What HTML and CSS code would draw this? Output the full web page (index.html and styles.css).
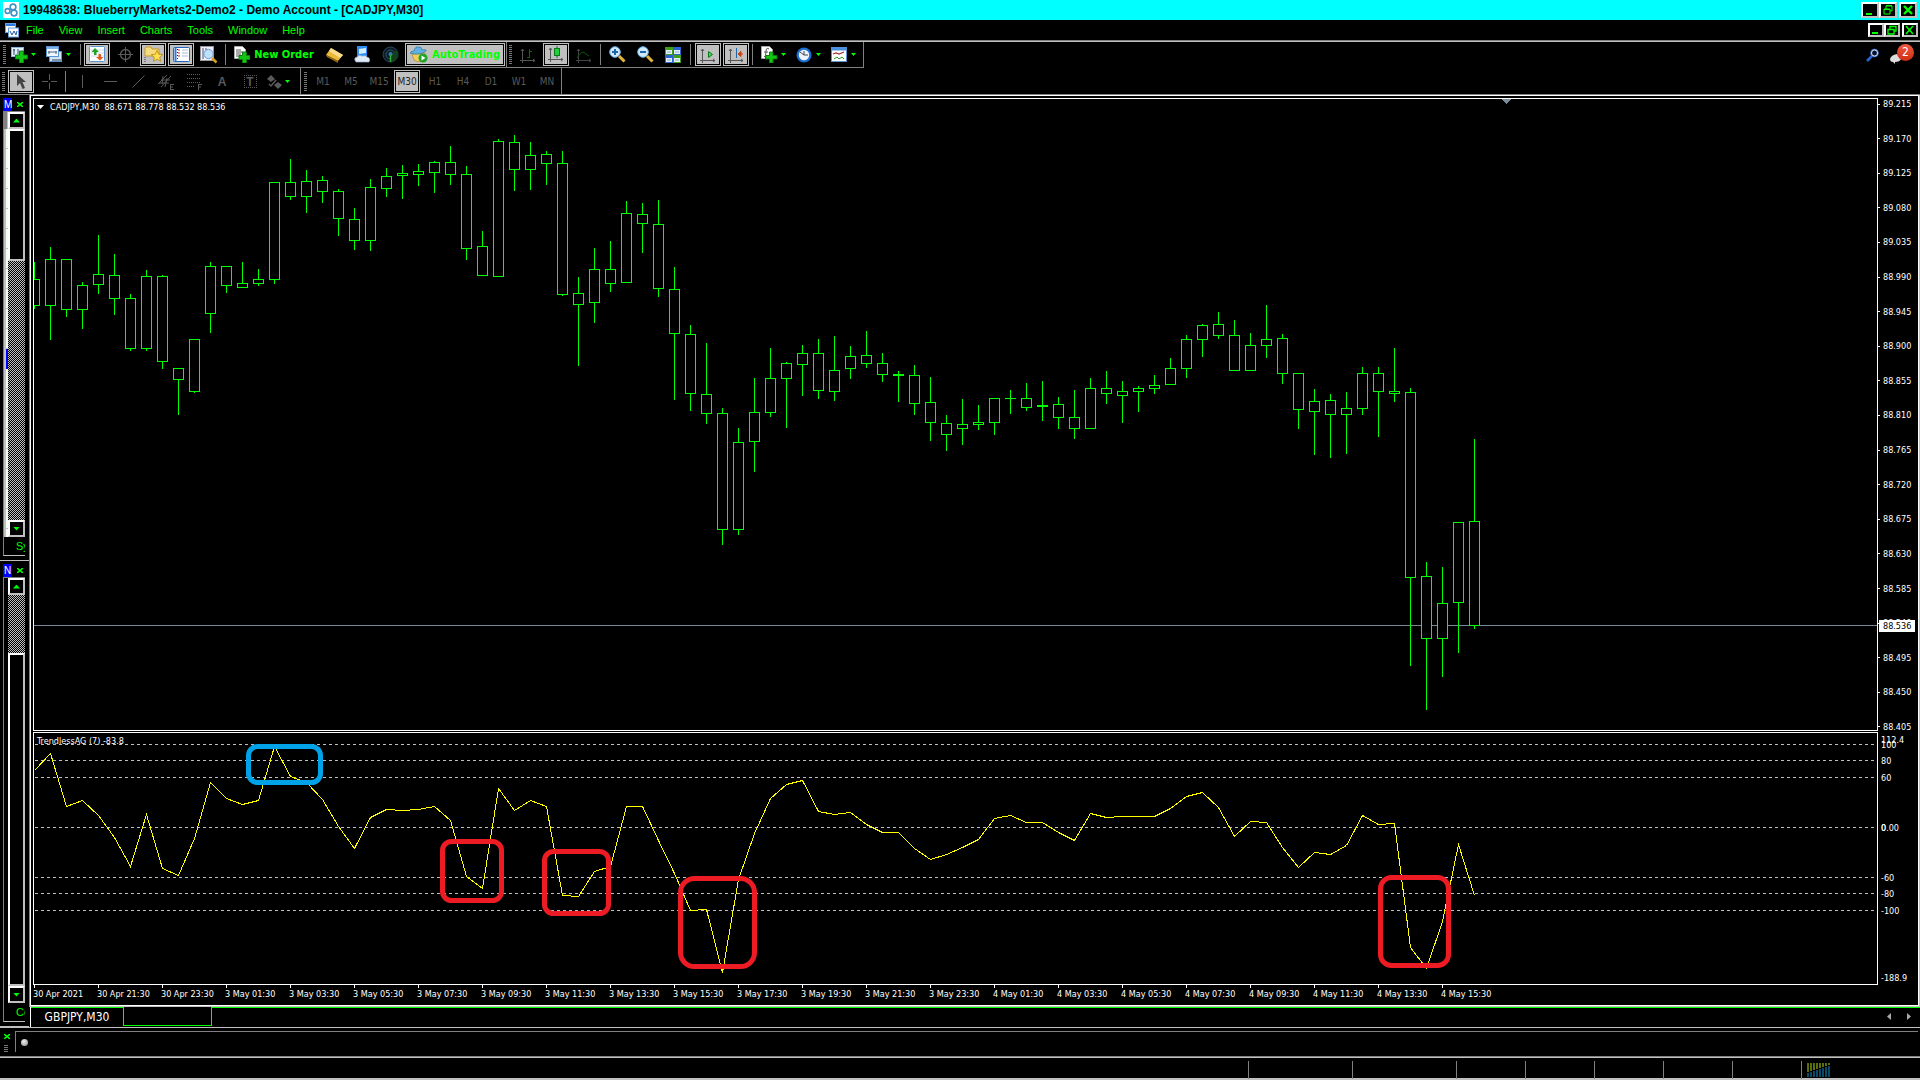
FILE: index.html
```html
<!DOCTYPE html>
<html lang="en">
<head>
<meta charset="utf-8">
<title>19948638: BlueberryMarkets2-Demo2 - Demo Account - [CADJPY,M30]</title>
<link rel="stylesheet" href="styles.css">
</head>
<body>
<header class="titlebar">
  <svg class="app-logo" width="16" height="16" viewBox="0 0 16 16"><rect width="16" height="16" fill="#fff"/><g fill="none" stroke="#3f93c6" stroke-width="1.6"><circle cx="10" cy="5" r="2.9"/><circle cx="4.6" cy="9" r="2.4"/><circle cx="11" cy="11" r="2.9"/></g></svg>
  <h1 class="titlebar__text">19948638: BlueberryMarkets2-Demo2 - Demo Account - [CADJPY,M30]</h1>
  <div class="winbtns">
    <button class="winbtn" aria-label="Minimize"><svg width="12" height="12"><path d="M2 9h6v2H2z" fill="#0f0"/></svg></button>
    <button class="winbtn" aria-label="Restore"><svg width="12" height="12"><path d="M4 5V2h6v5H8M2 5h6v5H2z" fill="none" stroke="#0f0" stroke-width="1"/><path d="M4 1h6v1H4zM2 5h6v1H2z" fill="#0f0"/></svg></button>
    <button class="winbtn winbtn--close" aria-label="Close"><svg width="12" height="12"><path d="M2 2l8 8M10 2l-8 8" stroke="#0f0" stroke-width="2.4"/></svg></button>
  </div>
</header>
<nav class="menubar">
  <svg class="menubar__icon" width="14" height="15" viewBox="0 0 14 15"><rect x=".5" y=".5" width="10" height="9" fill="#fff" stroke="#6aa0e0"/><path d="M1 2h9" stroke="#2e7be0" stroke-width="2"/><rect x="3.500" y="5" width="10" height="9" fill="#fff" stroke="#6aa0e0"/><path d="M5 8l2 4 2-4 2 4 1-4" fill="none" stroke="#25539c"/></svg>
  <button>File</button><button>View</button><button>Insert</button><button>Charts</button><button>Tools</button><button>Window</button><button>Help</button>
  <div class="winbtns winbtns--small">
    <button class="winbtn" aria-label="Minimize chart"><svg width="12" height="10"><path d="M2 7h6v2H2z" fill="#0f0"/></svg></button>
    <button class="winbtn" aria-label="Restore chart"><svg width="12" height="10"><path d="M4 4V1.500h6V6H8M2 4.500h6V9H2z" fill="none" stroke="#0f0" stroke-width="1.3"/></svg></button>
    <button class="winbtn winbtn--close" aria-label="Close chart"><svg width="12" height="10"><path d="M2 1l7 8M9 1L2 9" stroke="#0f0" stroke-width="1.500"/></svg></button>
  </div>
</nav>

<div class="toolbars">
  <div class="toolrow toolrow--top">
    <div class="group group--standard">
      <span class="grip"></span>
      <button class="tool tool--drop" aria-label="New chart"><svg width="17" height="17"><rect x="0.500" y="1.500" width="12" height="9" fill="#dff0ff" stroke="#8bb4dc"/><path d="M3 3v6M2 4h2M7 3v5" stroke="#345"/><path d="M8.500 5h4v4h4v4h-4v4h-4v-4h-4V9h4z" fill="#12c512" stroke="#0a7d0a"/></svg><i class="caret"></i></button>
      <button class="tool tool--drop" aria-label="Profiles"><svg width="17" height="17"><rect x="3.500" y="5.500" width="12" height="10" fill="#cfe2f7" stroke="#5b93d1"/><path d="M6 14h9" stroke="#345"/><rect x=".5" y=".5" width="12" height="10" fill="#eef6ff" stroke="#5b93d1"/><path d="M1 2h11" stroke="#7fb2ea" stroke-width="2"/><path d="M2 6h9M3 5v3M10 5v3" stroke="#567"/></svg><i class="caret"></i></button>
      <span class="sep"></span>
      <button class="tool is-on" aria-label="Market Watch"><svg width="17" height="17"><rect x=".5" y=".5" width="15" height="15" rx="1" fill="#fff" stroke="#5b93d1"/><path d="M2 4h13M2 7h13M2 10h13" stroke="#ccd8e8"/><path d="M6 2L2.500 6H5v3h2.500V6H10z" fill="#22a322"/><path d="M11 14.500L14.500 11H12V8H9.500v3H7z" fill="#e05a1c"/></svg></button>
      <button class="tool" aria-label="Data Window"><svg width="17" height="17"><g fill="none" stroke="#5a5a5a"><circle cx="8.500" cy="8.500" r="5" stroke-width="1.300"/><path d="M8.500 1v15M1 8.500h15"/></g></svg></button>
      <button class="tool is-on" aria-label="Navigator"><svg width="19" height="17"><path d="M1 2l1-1h5l1 2h7v7H1z" fill="#f7dc7d" stroke="#c59b27"/><path d="M13 4.500l1.700 3.700 4 .4-3 2.700.9 4-3.600-2-3.600 2 .9-4-3-2.700 4-.4z" fill="#ffdf4d" stroke="#b8860b" stroke-width=".8"/><path d="M1 11v5" stroke="#333" stroke-dasharray="1 1"/></svg></button>
      <button class="tool is-on" aria-label="Terminal"><svg width="17" height="16"><rect x=".5" y=".5" width="16" height="14" rx="1" fill="#fff" stroke="#1f66c0"/><path d="M2.500 1v13" stroke="#2e7be0" stroke-width="2"/><path d="M5 3h2M5 6h2M5 9h2" stroke="#d22"/><path d="M4.500 2v11" stroke="#222" stroke-dasharray="1 2"/><path d="M9 3h6M9 6h6M9 9h6" stroke="#a9bedb"/></svg></button>
      <button class="tool" aria-label="Strategy Tester"><svg width="18" height="18"><rect x=".5" y=".5" width="13" height="14" fill="#eef" stroke="#999"/><path d="M3 2v11M6 2v4" stroke="#556"/><circle cx="8.500" cy="8" r="4.600" fill="#bfe0f8" stroke="#6aa0d0"/><path d="M12 12l4.500 4.500" stroke="#d8a018" stroke-width="2.500"/></svg></button>
      <span class="sep"></span>
      <button class="tool tool--order"><svg width="16" height="17"><path d="M.5.5h8l3 3v9H.5z" fill="#fff" stroke="#aaa"/><path d="M2 4h5M2 6h7M2 8h5M2 10h4" stroke="#555"/><path d="M8.500 6h4v3.500H16v4h-3.500V17h-4v-3.500H5v-4h3.500z" fill="#12c512" stroke="#0a7d0a"/></svg>New Order</button>
      <button class="tool" aria-label="MetaEditor"><svg width="17" height="17"><path d="M5 2l12 7-5 6L0 9z" fill="#e9b93c"/><path d="M5 2l12 7-3 3L3 5z" fill="#f9dc8c"/><path d="M0 9l12 6v2L1 11z" fill="#9a6a10"/></svg></button>
      <button class="tool" aria-label="Market"><svg width="17" height="17"><path d="M3 0h10v10H3z" fill="#2f8ff0"/><path d="M5 3l7-1v5l-7 1z" fill="#d6efff"/><path d="M2 16q-3-4 1-5 2-3 5-1 4-1 5 1 4 1 2 5z" fill="#e3ebf6" stroke="#8fa9cc" stroke-width=".7"/></svg></button>
      <button class="tool" aria-label="Signals"><svg width="17" height="17"><circle cx="8.500" cy="8.500" r="7.500" fill="#0e1c26" stroke="#28485e"/><circle cx="8.500" cy="8.500" r="4.500" fill="none" stroke="#2d5672"/><path d="M8.500 8.500V16a7.500 7.500 0 0 0 6-12z" fill="#12401a"/><circle cx="8.500" cy="8" r="2" fill="#2f7cb0"/><path d="M8.500 9v7" stroke="#2fae3c" stroke-width="1.500"/></svg></button>
      <button class="tool tool--auto is-on"><svg width="18" height="17"><path d="M2 8l2 6q4 3 8 1l3-8z" fill="#f2cf5a" stroke="#b58a1c" stroke-width=".7"/><path d="M0 7q1-2 4-2 1-5 5-4 3 0 3 3 5-1 4 1-7 5-16 2z" fill="#62b0e4" stroke="#2b74a8" stroke-width=".7"/><circle cx="13" cy="12" r="4.500" fill="#1fa52a"/><path d="M11.500 9.500l4 2.500-4 2.500z" fill="#fff"/></svg>AutoTrading</button>
    </div>
    <div class="group group--charts">
      <span class="grip"></span>
      <button class="tool" aria-label="Bar Chart"><svg width="16" height="16"><path d="M2.500 2v14M0 13.500h15M1 4l1.500-2L4 4M13 12l2 1.500-2 1.500" fill="none" stroke="#555"/><path d="M9.500 2v9M7 10.500h2M10 4.500h2" stroke="#0a6a0a"/></svg></button>
      <button class="tool is-on" aria-label="Candlesticks"><svg width="16" height="17"><path d="M2.500 2v14M0 13.500h15M1 4l1.500-2L4 4M13 12l2 1.500-2 1.500" fill="none" stroke="#555"/><path d="M9 0v12" stroke="#063"/><rect x="6.500" y="2.500" width="5" height="7" fill="#1fd03a" stroke="#087a18"/></svg></button>
      <button class="tool" aria-label="Line Chart"><svg width="16" height="16"><path d="M2.500 2v14M0 13.500h15M1 4l1.500-2L4 4M13 12l2 1.500-2 1.500" fill="none" stroke="#444"/><path d="M1 11q5-9 9-4l3 2" fill="none" stroke="#0a5a0a"/></svg></button>
      <span class="sep"></span>
      <button class="tool" aria-label="Zoom In"><svg width="17" height="17"><path d="M10 10l5.500 5.500" stroke="#e5b53a" stroke-width="3"/><circle cx="6" cy="6" r="5.300" fill="#cfeaff" stroke="#6fb0e0"/><path d="M3 6h6M6 3v6" stroke="#1f66a8" stroke-width="2"/></svg></button>
      <button class="tool" aria-label="Zoom Out"><svg width="17" height="17"><path d="M10 10l5.500 5.500" stroke="#e5b53a" stroke-width="3"/><circle cx="6" cy="6" r="5.300" fill="#cfeaff" stroke="#6fb0e0"/><path d="M3 6h6" stroke="#1f66a8" stroke-width="2"/></svg></button>
      <button class="tool" aria-label="Tile Windows"><svg width="16" height="16"><path d="M0 0h8v8H0zM8 8h8v8H8z" fill="#3f9c1c"/><path d="M8 0h8v8H8zM0 8h8v8H0z" fill="#2a62cf"/><path d="M1 3h6v4H1zM9 3h6v4H9zM1 11h6v4H1zM9 11h6v4H9z" fill="#e6f0fb"/><path d="M2 5h4M10 5h4M2 13h4M10 13h4" stroke="#8ab"/></svg></button>
      <span class="sep sep--roomy"></span>
      <button class="tool is-on" aria-label="Auto Scroll"><svg width="16" height="16"><path d="M2.500 2v14M0 13.500h15M1 4l1.500-2L4 4M13 12l2 1.500-2 1.500" fill="none" stroke="#555"/><path d="M8.500 4.500l4 3-4 3z" fill="#3fd45a" stroke="#087a18"/></svg></button>
      <button class="tool is-on" aria-label="Chart Shift"><svg width="16" height="16"><path d="M2.500 2v14M0 13.500h15M1 4l1.500-2L4 4M13 12l2 1.500-2 1.500" fill="none" stroke="#555"/><path d="M8.500 1v10" stroke="#1f66a8"/><path d="M15 7H11M13 4.500L10 7l3 2.500z" stroke="#c8400c" fill="#c8400c"/></svg></button>
      <span class="sep"></span>
      <div class="drops">
      <button class="tool tool--drop" aria-label="Indicators"><svg width="17" height="17"><path d="M.5.5h8l3 3v9H.5z" fill="#fff" stroke="#aaa"/><path d="M3 11q2 0 2-5t3-3M3 6h4" stroke="#555" fill="none"/><path d="M8.500 6h3.500v3.500h4v3.500h-4v4H8.500v-4h-4V9.500h4z" fill="#12c512" stroke="#0a7d0a"/></svg><i class="caret"></i></button>
      <button class="tool tool--drop" aria-label="Periods"><svg width="17" height="16"><circle cx="8" cy="8" r="7.500" fill="#1d6fd0"/><circle cx="8" cy="8" r="5.200" fill="#eef4fb"/><path d="M8 4v4h4M4 5l4 3" stroke="#445" fill="none"/></svg><i class="caret"></i></button>
      <button class="tool tool--drop" aria-label="Templates"><svg width="17" height="16"><rect x=".5" y=".5" width="15" height="14" fill="#fff" stroke="#5b93d1"/><path d="M1 2h14" stroke="#4a90e2" stroke-width="3"/><path d="M2 7l3-1 3 1 5-2" stroke="#a33" fill="none" stroke-width="1.300"/><path d="M3 12l3-2 2 2 3-2 2 2" stroke="#292" fill="none"/></svg><i class="caret"></i></button>
      </div>
    </div>
    <div class="quick">
      <button class="quick__btn" aria-label="Search"><svg width="14" height="14"><path d="M6 8l-5 5" stroke="#2a62cf" stroke-width="2.600"/><circle cx="8.500" cy="5" r="3.700" fill="#08122e" stroke="#3f78dc" stroke-width="1.200"/><circle cx="8.500" cy="5" r="3" fill="none" stroke="#dfe9ff" stroke-width="1"/></svg></button>
      <button class="quick__btn" aria-label="Notifications"><svg width="14" height="18"><path d="M0 13q1-4 7-5l4 5q-1 3-6 3v2l-2-2q-3 0-3-3z" fill="#ddd"/></svg><span class="badge">2</span></button>
    </div>
  </div>
  <div class="toolrow toolrow--bottom">
    <div class="group group--line">
      <span class="grip"></span>
      <button class="tool is-on" aria-label="Cursor"><svg width="10" height="16"><path d="M1 0v12l3-3 2.500 6L9 14 6.500 8H10z" fill="#444"/></svg></button>
      <button class="tool" aria-label="Crosshair"><svg width="17" height="17"><path d="M8.500 1v6M8.500 10v6M1 8.500h6M10 8.500h6" stroke="#5a5a5a"/></svg></button>
      <span class="sep"></span>
      <button class="tool" aria-label="Vertical Line"><svg width="13" height="13"><path d="M6.500 0v13" stroke="#5a5a5a"/></svg></button>
      <button class="tool" aria-label="Horizontal Line"><svg width="13" height="13"><path d="M0 6.500h13" stroke="#5a5a5a"/></svg></button>
      <button class="tool" aria-label="Trendline"><svg width="13" height="13"><path d="M.5 12.500l12-12" stroke="#5a5a5a"/></svg></button>
      <button class="tool" aria-label="Equidistant Channel"><svg width="17" height="17"><path d="M0 11L9 2M3 14L13 3M3 7h9M1 10h10M5 3l-1 8M9 5l-2 9" stroke="#5a5a5a" fill="none"/><path d="M12.500 11v5.500M12 11.500h4M12 14h3M12 16.500h4" stroke="#5a5a5a"/></svg></button>
      <button class="tool" aria-label="Fibonacci Retracement"><svg width="17" height="17"><path d="M1 1.500h14M1 5.500h14M1 9.500h14M1 13.500h8" stroke="#5a5a5a" stroke-dasharray="1 1"/><path d="M12.500 11v6M12 11.500h4M12 14h3" stroke="#5a5a5a"/></svg></button>
      <button class="tool tool--glyph">A</button>
      <button class="tool tool--glyph"><span class="textlabel">T</span></button>
      <button class="tool tool--drop" aria-label="Arrows"><svg width="15" height="14"><path d="M0 4l4-4 4 4-4 3zM7 10l4-3 4 3-4 4z" fill="#5a5a5a"/><path d="M2 9l2 2 5-6" stroke="#5a5a5a" fill="none" stroke-width="1.500"/></svg><i class="caret"></i></button>
    </div>
    <div class="group group--periods">
      <span class="grip"></span>
      <button class="tool">M1</button><button class="tool">M5</button><button class="tool">M15</button><button class="tool is-on">M30</button><button class="tool">H1</button><button class="tool">H4</button><button class="tool">D1</button><button class="tool">W1</button><button class="tool">MN</button>
    </div>
  </div>
</div>

<main class="workspace">
  <aside class="sidebar">
    <section class="panel">
      <div class="panel__head"><span class="panel__name">M</span><button class="closer" aria-label="Close Market Watch"><svg width="6" height="5"><path d="M0 0l6 5M6 0L0 5" stroke="#0f0" stroke-width="1.500"/></svg></button></div>
      <div class="panel__body">
        <div class="quotes"><span class="quotes__head"></span><span class="quotes__rows"><span class="quotes__mark"></span></span></div>
        <div class="scroll scroll--market">
          <button class="scroll__btn" aria-label="Scroll up"><i class="up"></i></button><span class="scroll__thumb"></span><span class="scroll__track"></span><button class="scroll__btn" aria-label="Scroll down"><i class="caret"></i></button>
        </div>
      </div>
      <div class="panel__tab">Sy</div>
    </section>
    <section class="panel">
      <div class="panel__head"><span class="panel__name">N</span><button class="closer" aria-label="Close Navigator"><svg width="6" height="5"><path d="M0 0l6 5M6 0L0 5" stroke="#0f0" stroke-width="1.500"/></svg></button></div>
      <div class="panel__body">
        <div class="quotes quotes--empty"></div>
        <div class="scroll scroll--nav">
          <button class="scroll__btn" aria-label="Scroll up"><i class="up"></i></button><span class="scroll__track"></span><span class="scroll__thumb"></span><button class="scroll__btn" aria-label="Scroll down"><i class="caret"></i></button>
        </div>
      </div>
      <div class="panel__tab">Co</div>
    </section>
  </aside>

  <div class="charts">
    <section class="window">
      <div class="plot">
        <div class="pane pane--price">
          <svg class="canvas" id="price"></svg>
          <p class="legend"><i class="caret caret--white"></i><span>CADJPY,M30&nbsp; 88.671 88.778 88.532 88.536</span></p>
        </div>
        <div class="axis axis--price">
          <span>89.215</span><span>89.170</span><span>89.125</span><span>89.080</span><span>89.035</span><span>88.990</span><span>88.945</span><span>88.900</span><span>88.855</span><span>88.810</span><span>88.765</span><span>88.720</span><span>88.675</span><span>88.630</span><span>88.585</span><span>88.540</span><span>88.495</span><span>88.450</span><span>88.405</span>
          <b class="axis__now">88.536</b>
        </div>
        <div class="pane pane--indicator">
          <svg class="canvas" id="indicator"></svg>
          <p class="legend">TrendlessAG (7) -83.8</p>
        </div>
        <div class="axis axis--levels" id="levels"></div>
        <div class="times" id="times"></div>
      </div>
    </section>
    <div class="tabs">
      <button class="tab">GBPJPY,M30</button><button class="tab tab--active" aria-label="CADJPY,M30"></button>
      <div class="tabs__rest"><button class="tabs__arrow" aria-label="Previous"><svg width="5" height="7"><path d="M4 0v7L0 3.500z" fill="#aaa"/></svg></button><button class="tabs__arrow" aria-label="Next"><svg width="5" height="7"><path d="M1 0v7l4-3.500z" fill="#aaa"/></svg></button></div>
    </div>
  </div>
</main>

<section class="terminal">
  <div class="terminal__side"><button class="closer" aria-label="Close Terminal"><svg width="6" height="5"><path d="M0 0l6 5M6 0L0 5" stroke="#0f0" stroke-width="1.500"/></svg></button><span class="terminal__grip"></span></div>
  <div class="terminal__body"><span class="dot"></span></div>
</section>
<footer class="status">
  <span class="cell cell--wide"></span><span class="cell cell--wide"></span><span class="cell"></span><span class="cell"></span><span class="cell"></span><span class="cell"></span><span class="cell"></span>
  <span class="cell cell--last"><svg width="24" height="14" shape-rendering="crispEdges"><path d="M0 0h2v9H0zM3 0h2v8H3zM6 0h2v7H6zM9 0h2v6H9zM12 0h2v5h-2zM15 0h2v4h-2zM18 0h2v3h-2zM21 0h2v2h-2z" fill="#5c6e0c"/><path d="M0 10h2v4H0zM3 9h2v5H3zM6 8h2v6H6zM9 7h2v7H9zM12 6h2v8h-2zM15 5h2v9h-2zM18 4h2v10h-2zM21 3h2v11h-2z" fill="#0b4a66"/></svg></span>
</footer>
<script src="chart.js"></script>
</body>
</html>
```

FILE: styles.css
```css
:root {
  --green: #00ff00;
  --gray: #808080;
  --silver: #c0c0c0;
  --chart-font: "DejaVu Sans Condensed", "Noto Sans", sans-serif;
  --ui-font: "Liberation Sans", Arial, sans-serif;
}
* { box-sizing: border-box; }
body {
  margin: 0;
  min-height: 100vh;
  display: flex;
  flex-direction: column;
  background: #000;
  color: #fff;
  font: 11px/14px var(--ui-font);
  overflow-x: hidden;
}
button {
  margin: 0;
  padding: 0;
  border: 0;
  background: none;
  color: var(--green);
  font: inherit;
}
svg { display: block; flex: none; }
p, h1 { margin: 0; }

.titlebar {
  display: flex;
  align-items: center;
  height: 20px;
  padding: 0 3px;
  gap: 4px;
  background: #00ffff;
  color: #000;
}
.titlebar__text { font: bold 12px/20px var(--ui-font); }
.winbtns { display: flex; margin-left: auto; }
.winbtn {
  display: flex;
  align-items: center;
  justify-content: center;
  width: 18px;
  height: 16px;
  background: #000;
  border: 2px solid #fff;
  border-right-color: var(--silver);
  border-bottom-color: var(--silver);
}
.winbtn--close { margin-left: 2px; }
.winbtns--small .winbtn { width: 16px; height: 14px; }

.menubar {
  display: flex;
  align-items: center;
  height: 20px;
  padding: 0 2px 0 5px;
  gap: 15px;
}
.menubar__icon { margin-right: -8px; }

.toolbars {
  border-top: 1px solid var(--gray);
  border-bottom: 1px solid var(--gray);
  box-shadow: inset 0 1px var(--silver);
  padding-top: 1px;
}
.toolrow { display: flex; height: 26px; }
.group {
  display: flex;
  align-items: center;
  gap: 2px;
  padding-left: 2px;
  border-right: 1px solid var(--gray);
}
.toolrow--top .group { border-bottom: 1px solid var(--gray); }
.toolrow--bottom .group { padding-top: 1px; }
.group--standard { padding-left: 3px; padding-right: 1px; }
.group--line { padding-right: 2px; }
.group--charts { padding-right: 1px; }
.group--periods { padding-left: 3px; padding-right: 1px; }
.grip {
  width: 3px;
  height: 20px;
  margin-right: 1px;
  background: repeating-linear-gradient(#777 0 1px, #000 1px 2px);
}
.sep { width: 1px; height: 21px; margin: 0 1px; background: var(--gray); }
.sep--roomy { margin: 0 2px; }
.tool {
  display: flex;
  align-items: center;
  justify-content: center;
  width: 26px;
  height: 23px;
  color: #5a5a5a;
  font: 10px/12px var(--chart-font);
}
.tool.is-on {
  background: var(--silver);
  color: #222;
  border: 1px solid var(--silver);
  box-shadow: inset 0 0 0 1px #000;
}
.tool--drop { width: 33px; gap: 3px; padding-left: 2px; justify-content: flex-start; }
.drops { display: flex; gap: 2px; margin-left: 3px; }
.caret {
  width: 5px;
  height: 3px;
  background: var(--green);
  clip-path: polygon(0 0, 100% 0, 50% 100%);
}
.caret--white { width: 7px; height: 4px; background: #fff; }
.up {
  width: 7px;
  height: 4px;
  background: var(--green);
  clip-path: polygon(50% 0, 100% 100%, 0 100%);
}
.tool--order, .tool--auto, .tool--auto.is-on {
  color: var(--green);
  font: bold 11px/14px var(--chart-font);
}
.tool--order { width: 90px; gap: 4px; }
.tool--auto { width: 100px; gap: 4px; }
.tool--glyph { font: bold 12px/14px var(--ui-font); }
.textlabel { width: 13px; height: 13px; line-height: 12px; border: 1px dotted #5a5a5a; }

.quick { display: flex; align-items: center; gap: 10px; margin-left: auto; padding-right: 6px; }
.quick__btn { position: relative; width: 14px; }
.quick__btn + .quick__btn { width: 24px; }
.badge {
  position: absolute;
  top: -2px;
  right: 0;
  width: 17px;
  height: 17px;
  border-radius: 50%;
  background: linear-gradient(#f0593f, #cf2d12);
  color: #fff;
  font: 12px/17px var(--chart-font);
  text-align: center;
}

.workspace { display: flex; flex: 1; border-bottom: 1px solid var(--silver); }
.sidebar { display: flex; flex-direction: column; width: 29px; }
.panel {
  display: flex;
  flex: 1;
  flex-direction: column;
  padding: 2px 0 4px 3px;
  border-bottom: 1px solid var(--silver);
}
.panel__head { display: flex; align-items: center; gap: 5px; height: 14px; }
.panel__name {
  width: 9px;
  height: 13px;
  overflow: hidden;
  padding-left: 1px;
  background: #00f;
  font-size: 10px;
  line-height: 13px;
}
.closer { display: flex; }
.panel__body { display: flex; flex: 1; width: 22px; border-top: 1px solid var(--gray); }
.quotes { display: flex; flex-direction: column; width: 5px; border-left: 1px solid var(--gray); }
.quotes__head { height: 17px; background: var(--gray); border-right: 1px solid var(--silver); }
.quotes__rows {
  flex: 1;
  padding-top: 220px;
  border-left: 2px solid var(--silver);
  background: repeating-linear-gradient(#f4fff4 0 19px, var(--silver) 19px 20px);
}
.quotes__mark { display: block; height: 20px; background: #00f; }
.scroll { display: flex; flex-direction: column; width: 17px; }
.scroll__btn {
  display: flex;
  align-items: center;
  justify-content: center;
  height: 17px;
  border: 2px solid #fff;
  border-right-color: var(--silver);
  border-bottom-color: var(--silver);
}
.scroll__btn .caret { width: 7px; height: 4px; }
.scroll__thumb { border: 2px solid #fff; border-right-color: var(--silver); border-bottom-color: var(--silver); }
.scroll__track {
  background: repeating-conic-gradient(#c0c0c0 0 25%, #000 0 50%) 0 0 / 2px 2px;
}
.scroll--market .scroll__thumb { flex: 128; }
.scroll--market .scroll__track { flex: 260; }
.scroll--nav .scroll__track { flex: 58; }
.scroll--nav .scroll__thumb { flex: 328; }
.panel__tab {
  width: 22px;
  height: 19px;
  padding-left: 12px;
  overflow: hidden;
  border-left: 1px solid var(--gray);
  border-bottom: 1px solid var(--silver);
  color: var(--green);
  line-height: 18px;
}

.charts { display: flex; flex: 1; flex-direction: column; min-width: 0; }
.window {
  display: flex;
  flex: 1;
  border: 1px solid var(--silver);
  border-top: 0;
  border-left-color: var(--gray);
}
.plot {
  display: grid;
  flex: 1;
  grid-template-columns: minmax(0, 1fr) 40px;
  grid-template-rows: 1fr 253px 20px;
  padding: 2px 0 0 2px;
  border: 1px solid #fff;
  font: 9px/10px var(--chart-font);
}
.pane { position: relative; border: 1px solid #fff; overflow: hidden; }
.pane--price { margin-bottom: 1px; }
.canvas { position: absolute; inset: 0; width: 100%; height: 100%; }
.legend {
  position: relative;
  display: flex;
  align-items: center;
  gap: 6px;
  padding: 3px;
  white-space: nowrap;
}
.axis { position: relative; }
.axis--price { display: flex; flex-direction: column; justify-content: space-between; padding-top: 1px; }
.axis--price span { display: flex; align-items: center; gap: 3px; }
.axis--price span::before { content: ""; width: 2px; height: 1px; background: #fff; }
.axis__now {
  position: absolute;
  top: 522px;
  left: 1px;
  width: 36px;
  padding-left: 4px;
  background: #fff;
  color: #000;
  font-weight: normal;
  line-height: 12px;
}
.axis--levels span { position: absolute; left: 3px; }
.times { display: flex; grid-column: 1 / -1; }
.times span {
  flex: none;
  width: 64px;
  padding-top: 4px;
  white-space: nowrap;
  background: linear-gradient(#fff, #fff) 1px 0 / 1px 3px no-repeat;
}

.tabs { display: flex; height: 20px; border-left: 1px solid #fff; margin-left: 1px; font: 12px/14px var(--chart-font); }
.tab {
  width: 92px;
  padding-bottom: 2px;
  border-top: 1px solid var(--green);
  color: #fff;
}
.tab--active {
  width: 89px;
  height: 19px;
  border: 1px solid var(--green);
  border-top: 0;
}
.tabs__rest {
  display: flex;
  flex: 1;
  align-items: center;
  justify-content: flex-end;
  gap: 14px;
  padding: 0 9px 3px 0;
  border-top: 1px solid var(--green);
}

.terminal { display: flex; height: 28px; padding-top: 3px; }
.terminal__side { display: flex; flex-direction: column; gap: 6px; width: 15px; padding: 3px 4px; }
.terminal__grip { width: 4px; height: 8px; background: repeating-linear-gradient(#777 0 1px, #000 1px 2px); }
.terminal__body {
  flex: 1;
  height: 21px;
  margin-right: 2px;
  padding: 7px 5px;
  border-top: 1px solid var(--gray);
  border-left: 1px solid var(--gray);
}
.dot { display: block; width: 7px; height: 7px; border-radius: 50%; background: radial-gradient(circle at 40% 35%, #eee, #888); }

.status {
  display: flex;
  justify-content: flex-end;
  height: 24px;
  padding-top: 3px;
  border-top: 1px solid var(--gray);
  border-bottom: 2px solid var(--silver);
  box-shadow: inset 0 1px var(--silver);
}
.cell { width: 69px; height: 18px; margin-top: 1px; border-left: 1px solid var(--gray); }
.cell--wide { width: 104px; }
.cell--last { width: 119px; padding: 2px 5px; }
```

FILE: chart.js
```js
const STEP = 16;

// One bar per row: wick top, body top, body bottom, wick bottom.
const bars = [
[262,279,305,309],[247,259,305,340],[259,259,309,317],[282,285,309,329],[235,274,284,294],[254,275,298,315],[294,298,348,351],[270,276,348,351],[275,276,361,369],[368,368,379,415],
[339,339,391,393],[262,266,313,333],[266,266,285,293],[262,283,287,288],[269,279,283,286],[182,182,279,284],[159,182,196,200],[170,181,196,213],[176,180,191,203],[189,191,218,236],
[208,219,240,250],[179,187,240,251],[168,176,188,197],[165,173,175,199],[164,171,174,186],[161,162,172,193],[146,162,174,185],[166,174,248,260],[231,246,275,276],[139,141,276,277],
[135,142,169,191],[142,155,169,190],[151,154,163,185],[151,163,294,296],[277,293,304,366],[248,269,302,323],[241,269,283,292],[201,213,282,283],[203,214,223,253],[200,224,288,297],
[267,289,333,400],[325,334,393,411],[343,394,413,424],[408,413,529,545],[428,442,529,535],[378,412,441,472],[348,378,412,417],[362,363,378,428],[345,353,364,396],[339,353,390,399],
[336,370,391,401],[346,356,368,379],[331,355,363,368],[353,363,374,382],[371,374,375,402],[365,375,403,415],[377,402,422,441],[415,423,434,451],[399,424,428,445],[405,422,424,430],
[398,398,422,435],[390,398,398,414],[383,398,407,411],[381,405,406,421],[397,404,417,429],[390,417,428,439],[378,388,428,429],[371,388,393,404],[381,391,395,423],[386,388,391,412],
[375,385,388,394],[358,368,384,385],[335,339,368,378],[324,325,339,357],[312,324,335,339],[320,335,370,371],[333,345,370,371],[305,339,345,358],[334,338,373,384],[373,373,409,429],
[389,401,411,455],[394,400,414,458],[392,408,414,454],[367,373,408,415],[367,373,391,437],[348,391,393,402],[388,392,577,666],[562,576,638,710],[567,603,638,677],[522,522,602,653],[439,521,625,629]
];

const trend = [770,753,806,800,815,837,866,814,868,875,838,782,798,804,800,746,776,782,799,826,848,817,809,810,809,806,820,876,888,788,810,800,806,895,896,871,866,806,806,840,873,910,909,972,879,833,798,784,780,811,814,812,824,832,832,848,859,854,847,839,818,815,822,822,832,840,813,817,816,816,816,808,796,792,807,836,821,822,847,867,852,854,845,815,824,823,947,968,921,844,895];

const PRICE_TOP = 99;
const TREND_TOP = 733;

let price = '<line class="now" x1="0" x2="100%" y1="526.5" y2="526.5" stroke="#778899"/>';
bars.forEach(([hi, top, bottom, lo], i) => {
  const x = i * STEP + 0.5;
  const t = top - PRICE_TOP + 0.5;
  const b = bottom - PRICE_TOP + 0.5;
  price += `<path d="M${x} ${hi - PRICE_TOP}V${t}M${x} ${b}V${lo - PRICE_TOP}" stroke="#0f0"/>`;
  price += t === b
    ? `<path d="M${x - 5.5} ${t}h11" stroke="#0f0"/>`
    : `<rect x="${x - 5}" y="${t}" width="10" height="${b - t}" stroke="#0f0" fill="#000"/>`;
});
price += '<path d="M1468 0h9l-4.500 5z" fill="#778899"/>';
const priceSvg = document.getElementById('price');
priceSvg.setAttribute('shape-rendering', 'crispEdges');
priceSvg.innerHTML = price;

let out = '<g shape-rendering="crispEdges">';
[11, 27, 44, 94, 144, 160, 177].forEach(y => {
  out += `<line x1="1" x2="100%" y1="${y + 0.5}" y2="${y + 0.5}" stroke="#c0c0c0" stroke-dasharray="3 3"/>`;
});
out += `<polyline fill="none" stroke="#ff0" points="${trend.map((y, i) => `${i * STEP + 0.5},${y - TREND_TOP + 0.5}`).join(' ')}"/></g>`;
[
  [246, 744, 77, 41, 9, '#00a2e8'],
  [440, 839, 64, 64, 9, '#ed1c24'],
  [542, 849, 69, 67, 9, '#ed1c24'],
  [678, 876, 79, 93, 14, '#ed1c24'],
  [1378, 875, 73, 93, 11, '#ed1c24']
].forEach(([x, y, w, h, r, color]) => {
  out += `<rect x="${x - 31.5}" y="${y - TREND_TOP + 2.5}" width="${w - 5}" height="${h - 5}" rx="${r}" fill="none" stroke="${color}" stroke-width="5"/>`;
});
document.getElementById('indicator').innerHTML = out;

document.getElementById('levels').innerHTML = [
  ['112.4', 3], ['100', 8], ['80', 24], ['60', 41], ['0.00', 91], ['0', 91], ['-60', 141], ['-80', 157], ['-100', 174], ['-188.9', 241]
].map(([text, top]) => `<span style="top:${top}px">${text}</span>`).join('');

const hours = ['01:30', '03:30', '05:30', '07:30', '09:30', '11:30', '13:30', '15:30', '17:30', '19:30', '21:30', '23:30'];
document.getElementById('times').innerHTML = ['30 Apr 2021', '30 Apr 21:30', '30 Apr 23:30']
  .concat(hours.map(h => `3 May ${h}`), hours.slice(0, 8).map(h => `4 May ${h}`))
  .map(text => `<span>${text}</span>`).join('');
```
